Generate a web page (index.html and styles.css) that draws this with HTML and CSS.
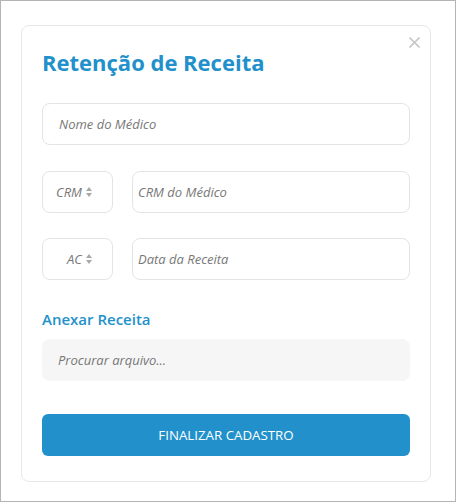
FILE: index.html
```html
<!DOCTYPE html>
<html lang="pt-BR">
<head>
<meta charset="utf-8">
<title>Retenção de Receita</title>
<link rel="stylesheet" href="styles.css">
</head>
<body>
<div class="frame">
  <div class="card">
    <button class="close" aria-label="Fechar">
      <svg width="11" height="11" viewBox="0 0 11 11"><path d="M0.5 0.5 L10.5 10.5 M10.5 0.5 L0.5 10.5" stroke="#c8c8c8" stroke-width="1.6" fill="none"/></svg>
    </button>
    <h2 class="title">Retenção de Receita</h2>
    <div class="field first"><span class="ph">Nome do Médico</span></div>
    <div class="row">
      <div class="select"><span class="ph">CRM</span><span class="arrows"></span></div>
      <div class="field grow"><span class="ph">CRM do Médico</span></div>
    </div>
    <div class="row">
      <div class="select"><span class="ph">AC</span><span class="arrows"></span></div>
      <div class="field grow"><span class="ph">Data da Receita</span></div>
    </div>
    <div class="label">Anexar Receita</div>
    <div class="file"><span class="ph">Procurar arquivo...</span></div>
    <button class="submit">FINALIZAR CADASTRO</button>
  </div>
</div>
</body>
</html>
```

FILE: styles.css
```css
* { box-sizing: border-box; }
html, body { margin: 0; padding: 0; }
body {
  width: 456px;
  height: 502px;
  font-family: "Open Sans", "Noto Sans", sans-serif;
  background: #fff;
}
.frame {
  width: 456px;
  height: 502px;
  border: 1px solid #b4b4b4;
  padding: 24px 0 0 20px;
}
.card {
  position: relative;
  width: 410px;
  height: 457px;
  border: 1px solid #e8e8e8;
  border-radius: 8px;
  padding: 18px 20px 0 20px;
  display: flex;
  flex-direction: column;
}
.close {
  position: absolute;
  top: 11px;
  right: 10px;
  padding: 0;
  border: 0;
  background: none;
  width: 11px;
  height: 11px;
  display: block;
}
.close svg { display: block; }
.title {
  margin: 0 0 23px 0;
  font-size: 22px;
  line-height: 36px;
  font-weight: 700;
  color: #2291cb;
}
.field, .select, .file {
  height: 42px;
  border: 1px solid #e4e4e4;
  border-radius: 8px;
  display: flex;
  align-items: center;
  padding: 0 16px;
}
.ph {
  font-style: italic;
  font-size: 13px;
  color: #777;
}
.field { margin-bottom: 25px; }
.field.first { margin-bottom: 26px; }
.row {
  display: flex;
  gap: 19px;
}
.select {
  width: 71px;
  flex: none;
  justify-content: flex-end;
  padding: 0 19px 0 0;
  margin-bottom: 25px;
}
.field.grow { padding-left: 5px; flex: 1; }
.arrows {
  width: 7px;
  height: 10px;
  margin-left: 4px;
  position: relative;
  display: inline-block;
}
.arrows::before, .arrows::after {
  content: "";
  position: absolute;
  left: 0;
  border-left: 3.5px solid transparent;
  border-right: 3.5px solid transparent;
}
.arrows::before { top: 0; border-bottom: 4px solid #a8a8a8; }
.arrows::after { bottom: 0; border-top: 4px solid #a8a8a8; }
.label {
  margin: 4px 0 10px 0;
  font-size: 15px;
  line-height: 20px;
  font-weight: 600;
  color: #2291cb;
}
.file {
  border: 0;
  background: #f6f6f6;
  margin-bottom: 33px;
}
.submit {
  height: 42px;
  border: 0;
  border-radius: 6px;
  background: #2291cb;
  color: #fff;
  font-family: "Open Sans", "Noto Sans", sans-serif;
  font-size: 13.3px;
  font-weight: 400;
  width: 100%;
  padding: 0;
}
```
